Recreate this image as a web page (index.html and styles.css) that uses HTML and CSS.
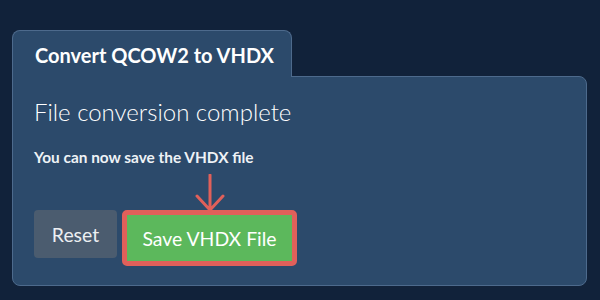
FILE: index.html
```html
<!DOCTYPE html>
<html lang="en">
<head>
  <meta charset="UTF-8" />
  <title>Convert QCOW2 to VHDX</title>
  <link rel="stylesheet" href="styles.css">
</head>
<body>
  <div class="card">
    <div class="tab">Convert QCOW2 to VHDX</div>
    <div class="panel">
      <h2>File conversion complete</h2>
      <p class="hint">You can now save the VHDX file</p>
      <div class="actions">
        <button class="btn reset">Reset</button>
        <div class="highlight">
          <svg class="arrow" width="30" height="38" viewBox="0 0 30 38">
            <path d="M15 1 V36 M2 22 L15 36 L28 22" fill="none" stroke="#e0605a" stroke-width="3" stroke-linecap="round" stroke-linejoin="round"/>
          </svg>
          <button class="btn save">Save VHDX File</button>
        </div>
      </div>
    </div>
  </div>
</body>
</html>
```

FILE: styles.css
```css
:root {
  --bg: #11223a;
  --panel: #2c4a6b;
  --line: #4d6a8c;
  --text: #fff;
  --red: #e0605a;
  --green: #5cb85c;
}

* {
  box-sizing: border-box;
}

body {
  margin: 0;
  padding: 30px 13px 0 12px;
  background: var(--bg);
  color: var(--text);
  font-family: Lato, 'Open Sans', sans-serif;
  height: 300px;
  overflow: hidden;
}

.tab {
  position: relative;
  z-index: 1;
  width: 280px;
  height: 47px;
  margin-bottom: -1px;
  padding: 12px 0 0 22px;
  background: var(--panel);
  border: 1px solid var(--line);
  border-bottom: none;
  border-radius: 8px 8px 0 0;
  font-size: 20px;
  font-weight: 700;
  white-space: nowrap;
}

.panel {
  height: 210px;
  padding: 20px 21px;
  background: var(--panel);
  border: 1px solid var(--line);
  border-radius: 0 8px 8px 8px;
}

h2 {
  margin: 0;
  font-size: 24px;
  font-weight: 300;
  line-height: 30px;
}

.hint {
  margin: 21px 0 0;
  font-size: 15.4px;
  font-weight: 700;
  color: #eef2f6;
}

.actions {
  display: flex;
  align-items: flex-start;
  gap: 5px;
  margin-top: 44px;
}

.btn {
  border: none;
  font-family: inherit;
  font-size: 19.4px;
  color: var(--text);
  cursor: pointer;
}

.reset {
  width: 83px;
  height: 48px;
  background: #4b5c6f;
  border-radius: 4px;
  color: #eceff2;
}

.highlight {
  position: relative;
  border: 5px solid var(--red);
  border-radius: 5px;
}

.arrow {
  position: absolute;
  left: 50%;
  bottom: 100%;
  margin-left: -15px;
  margin-bottom: 3px;
}

.save {
  display: block;
  width: 165px;
  height: 46px;
  background: var(--green);
}
```
